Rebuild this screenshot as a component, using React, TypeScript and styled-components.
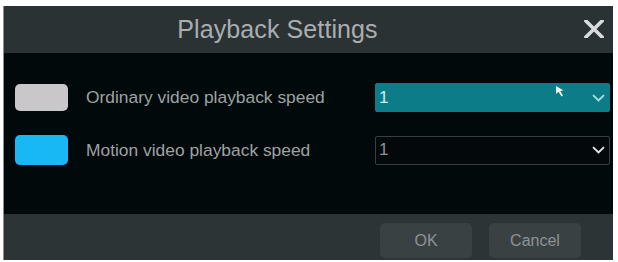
import React from "react";
import styled, { createGlobalStyle } from "styled-components";

const GlobalStyle = createGlobalStyle`
  html, body {
    margin: 0;
    padding: 0;
    background: #ffffff;
  }
  body {
    font-family: "Liberation Sans", Arial, sans-serif;
  }
`;

const Page = styled.div`
  width: 618px;
  height: 262px;
  padding: 6px 0 0 3px;
  box-sizing: border-box;
`;

const Dialog = styled.div`
  width: 610px;
  height: 254px;
  display: flex;
  flex-direction: column;
  background: #02090a;
  border-left: 1px solid #8a8f90;
  box-sizing: border-box;
`;

const Header = styled.div`
  height: 47px;
  flex-shrink: 0;
  display: flex;
  align-items: center;
  justify-content: center;
  padding-right: 62px;
  position: relative;
  background: #2b3234;
`;

const Title = styled.div`
  color: #a9aeb0;
  font-size: 25px;
  letter-spacing: 0.1px;
`;

const CloseButton = styled.button`
  position: absolute;
  right: 7px;
  top: 11px;
  width: 24px;
  height: 24px;
  padding: 0;
  border: 0;
  background: transparent;
  display: flex;
  align-items: center;
  justify-content: center;
  cursor: pointer;
`;

const Body = styled.div`
  flex: 1;
  display: flex;
  flex-direction: column;
  gap: 23px;
  padding: 30px 3px 0 11px;
`;

const Row = styled.div`
  display: grid;
  grid-template-columns: 53px 1fr 235px;
  column-gap: 18px;
  align-items: center;
  height: 29px;
`;

const Swatch = styled.div<{ $color: string; $h: number }>`
  width: 53px;
  height: ${(p) => p.$h}px;
  border-radius: 5px;
  background: ${(p) => p.$color};
`;

const Label = styled.div`
  color: #9da2a4;
  font-size: 17.4px;
  white-space: nowrap;
`;

const Select = styled.div<{ $active?: boolean }>`
  height: 29px;
  box-sizing: border-box;
  display: flex;
  align-items: center;
  justify-content: space-between;
  padding: 0 4px 0 3px;
  position: relative;
  background: ${(p) => (p.$active ? "#0c7d88" : "#03090a")};
  border: 1px solid ${(p) => (p.$active ? "#0c7d88" : "#393f41")};
  border-radius: 2px;
  color: ${(p) => (p.$active ? "#d6eef0" : "#8d9294")};
  font-size: 17px;
`;

const Cursor = styled.svg`
  position: absolute;
  right: 42px;
  top: 1px;
`;

const Footer = styled.div`
  height: 46px;
  flex-shrink: 0;
  display: flex;
  justify-content: flex-end;
  align-items: flex-start;
  gap: 17px;
  padding: 9px 32px 0 0;
  box-sizing: border-box;
  background: #2d3436;
`;

const FooterButton = styled.button`
  width: 92px;
  height: 35px;
  border: 0;
  border-radius: 5px;
  background: #3a4143;
  color: #8e9395;
  font-family: "Liberation Sans", Arial, sans-serif;
  font-size: 16px;
  cursor: pointer;
`;

const Chevron = ({ color }: { color: string }) => (
  <svg width="13" height="8" viewBox="0 0 13 8">
    <path d="M1 1.2 L6.5 6.5 L12 1.2" fill="none" stroke={color} strokeWidth="1.8" />
  </svg>
);

const rows = [
  { color: "#c9c7ca", h: 27, label: "Ordinary video playback speed", active: true },
  { color: "#17b8f4", h: 30, label: "Motion video playback speed", active: false },
];

export default function App() {
  return (
    <>
      <GlobalStyle />
      <Page>
        <Dialog>
          <Header>
            <Title>Playback Settings</Title>
            <CloseButton aria-label="Close">
              <svg width="20" height="18" viewBox="0 0 20 18">
                <path d="M2 1 L18 17 M18 1 L2 17" stroke="#d9dcdd" strokeWidth="3.6" strokeLinecap="square" />
              </svg>
            </CloseButton>
          </Header>
          <Body>
            {rows.map((r) => (
              <Row key={r.label}>
                <Swatch $color={r.color} $h={r.h} />
                <Label>{r.label}</Label>
                <Select $active={r.active}>
                  <span>1</span>
                  {r.active && (
                    <Cursor width="12" height="13" viewBox="0 0 12 13">
                      <path d="M1 1 L1 9 L3.5 6.8 L6.5 11.5 L8 10.5 L5.2 6 L8.5 5.6 Z" fill="#eef6f7" />
                    </Cursor>
                  )}
                  <Chevron color={r.active ? "#a9dde1" : "#e6e8e9"} />
                </Select>
              </Row>
            ))}
          </Body>
          <Footer>
            <FooterButton>OK</FooterButton>
            <FooterButton>Cancel</FooterButton>
          </Footer>
        </Dialog>
      </Page>
    </>
  );
}
